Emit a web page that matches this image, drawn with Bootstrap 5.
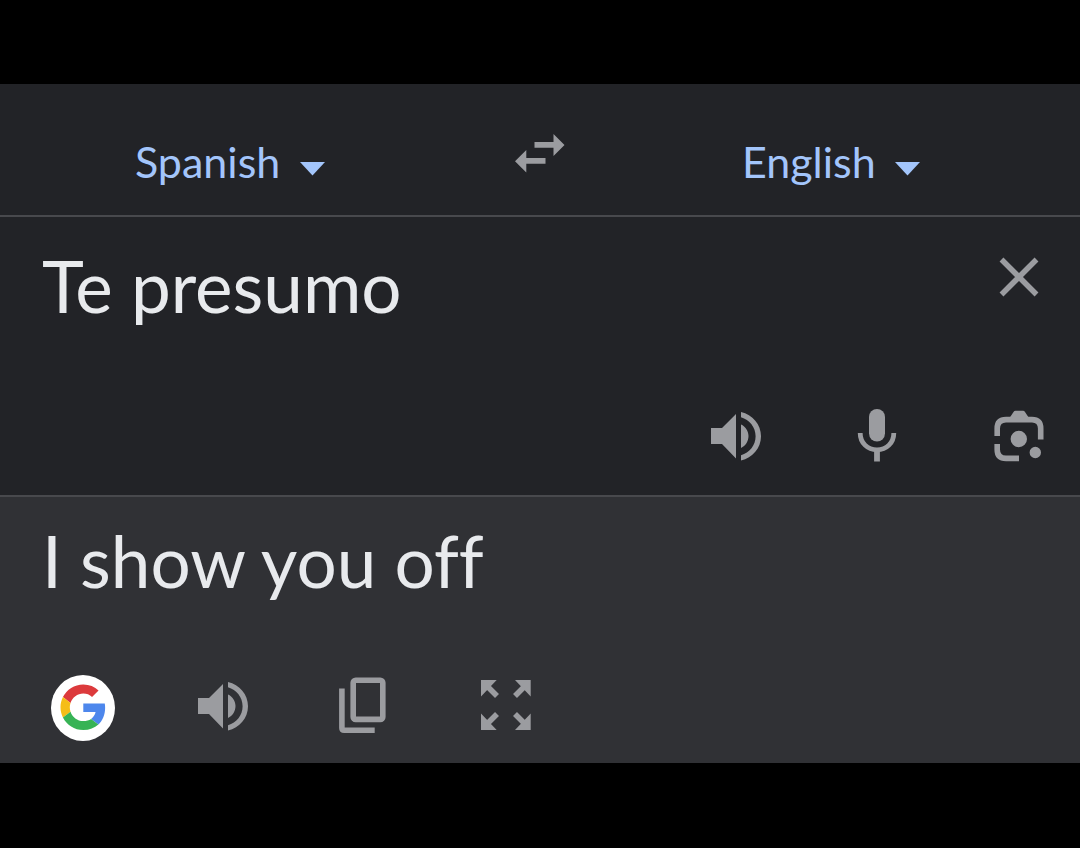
<!DOCTYPE html>
<html lang="en">
<head>
<meta charset="utf-8">
<meta name="viewport" content="width=device-width, initial-scale=1">
<title>Translate</title>
<link href="https://cdn.jsdelivr.net/npm/bootstrap@5.3.0/dist/css/bootstrap.min.css" rel="stylesheet">
<style>
  body { background: #000; color: #e8eaed; font-family: Lato, "Open Sans", sans-serif; padding-bottom: 1px; }
  .translator { background: #222327; }
  .rule-below { border-bottom: 2px solid #48494d; }
  .lang-bar { padding: 38px 0 30px; }
  .lang-slot { flex: 1 1 0; padding-top: 17px; }
  .lang-slot.target .lang-picker { margin-right: 38px; }
  .lang-picker { gap: 19px; color: #a3c5fb; }
  .lang-picker select {
    appearance: none; background: none; border: 0; padding: 0;
    color: inherit; font-size: 43px; line-height: 46px; height: 46px;
  }
  .caret-down { width: 25px; height: 14px; margin-top: 14px; }
  .tool { background: none; border: 0; padding: 0; color: #9b9ca0; width: 64px; height: 62px; flex: none; }
  .tool svg { display: block; width: 64px; height: 62px; }
  .brand-link, .brand-link svg { display: block; width: 64px; height: 66px; }
  .tools { gap: 77px; }
  .source { padding: 29px 29px 28px 42px; }
  .phrase { font-size: 71px; line-height: 80px; color: #e8eaed; font-variant-ligatures: none; }
  .source textarea { background: none; border: 0; padding: 0; resize: none; outline: 0; height: 84px; overflow: hidden; min-width: 0; }
  .source .tools { margin-top: 75px; }
  .result { background: #303135; padding: 24px 29px 22px 42px; }
  .result .tools { margin-top: 74px; padding-left: 9px; }
</style>
</head>
<body class="min-vh-100 d-flex flex-column justify-content-center">
<svg class="d-none" aria-hidden="true">
  <symbol id="speaker" viewBox="0 0 64 62">
    <path fill="currentColor" d="M6 23H17L31 9V53.500L17 39H6ZM36 19.500C40.500 21.500 43.500 26 43.500 31S40.500 41 36 43Z"/>
    <path fill="currentColor" d="M36 7C47.500 9.500 56 19.500 56 31.200S47.500 53 36 55.400V50.200C44.500 47.800 50.600 40.200 50.600 31.200S44.500 14.600 36 12.200Z"/>
  </symbol>
  <symbol id="triangle" viewBox="0 0 25 14"><path fill="currentColor" d="M0 0H25L12.500 13.500Z"/></symbol>
</svg>

<main class="translator">
  <header class="lang-bar rule-below d-flex align-items-start">
    <div class="lang-slot d-flex justify-content-center">
      <label class="lang-picker d-flex align-items-center">
        <select aria-label="Source language"><option>Spanish</option></select>
        <svg class="caret-down" aria-hidden="true"><use href="#triangle"/></svg>
      </label>
    </div>
    <div class="d-flex px-5">
      <button class="tool" type="button" aria-label="Swap languages">
        <svg viewBox="0 0 64 62" fill="currentColor"><path d="M26.500 20H45.500V12L56.500 23L45.500 34V25.800H26.500ZM37.500 36H18.300V28L7 39.200L18.300 50.500V41.800H37.500Z"/></svg>
      </button>
    </div>
    <div class="lang-slot target d-flex justify-content-center">
      <label class="lang-picker d-flex align-items-center">
        <select aria-label="Target language"><option>English</option></select>
        <svg class="caret-down" aria-hidden="true"><use href="#triangle"/></svg>
      </label>
    </div>
  </header>

  <section class="source rule-below">
    <div class="d-flex align-items-start">
      <textarea class="phrase flex-grow-1" rows="1" aria-label="Source text" spellcheck="false">Te presumo</textarea>
      <button class="tool" type="button" aria-label="Clear text">
        <svg viewBox="0 0 64 62" fill="none" stroke="currentColor" stroke-width="5.500"><path d="M14.500 13.500L49.500 48.500M49.500 13.500L14.500 48.500"/></svg>
      </button>
    </div>
    <div class="tools d-flex justify-content-end">
      <button class="tool" type="button" aria-label="Listen to source"><svg><use href="#speaker"/></svg></button>
      <button class="tool" type="button" aria-label="Speak">
        <svg viewBox="0 0 64 62" fill="none" stroke="currentColor"><rect x="23" y="4" width="16" height="32.500" rx="8" fill="currentColor" stroke="none"/><path stroke-width="4.800" d="M14.200 28C14.200 38 21.500 44.800 31 44.800S47.800 38 47.800 28"/><path stroke-width="5.800" d="M31 44V56.500"/></svg>
      </button>
      <button class="tool" type="button" aria-label="Translate with camera">
        <svg viewBox="0 0 64 62" fill="none" stroke="currentColor" stroke-width="5.600"><path d="M10.200 31V23.500Q10.200 14.600 19 14.600H45Q53.700 14.600 53.700 23.500V34.500M10.200 39V44.500Q10.200 53.400 19 53.400H32"/><path fill="currentColor" stroke="none" d="M22.500 13L26.500 7Q27.300 5.800 28.500 5.800H36Q37.300 5.800 38 7L42 13ZM23.600 34a8.200 8.200 0 1 0 16.400 0a8.200 8.200 0 1 0-16.400 0M42.600 47.500a5.700 5.700 0 1 0 11.400 0a5.700 5.700 0 1 0-11.400 0"/></svg>
      </button>
    </div>
  </section>

  <section class="result">
    <p class="phrase mb-0">I show you off</p>
    <div class="tools d-flex align-items-start">
      <a class="brand-link" href="#" aria-label="Search with Google">
        <svg viewBox="0 0 64 66"><ellipse cx="32" cy="33" rx="32" ry="33" fill="#fff"/>
          <g transform="translate(9.500 9.500) scale(.95)">
            <path fill="#dc3a3c" d="M24 9.500c3.540 0 6.710 1.220 9.210 3.600l6.850-6.850C35.900 2.380 30.470 0 24 0 14.620 0 6.510 5.380 2.560 13.220l7.980 6.190C12.430 13.720 17.740 9.500 24 9.500z"/>
            <path fill="#4d87ec" d="M46.980 24.550c0-1.570-.15-3.090-.38-4.550H24v9.020h12.940c-.58 2.960-2.260 5.480-4.780 7.180l7.730 6c4.510-4.180 7.090-10.360 7.090-17.650z"/>
            <path fill="#f5bd17" d="M10.530 28.590c-.48-1.450-.76-2.990-.76-4.590s.27-3.140.76-4.590l-7.980-6.190C.92 16.460 0 20.120 0 24c0 3.880.92 7.540 2.560 10.780l7.970-6.190z"/>
            <path fill="#37b355" d="M24 48c6.480 0 11.930-2.130 15.890-5.810l-7.730-6c-2.150 1.450-4.920 2.300-8.160 2.300-6.260 0-11.570-4.220-13.470-9.910l-7.980 6.190C6.510 42.620 14.620 48 24 48z"/>
          </g></svg>
      </a>
      <button class="tool" type="button" aria-label="Listen to translation"><svg><use href="#speaker"/></svg></button>
      <button class="tool" type="button" aria-label="Copy translation">
        <svg viewBox="0 0 64 62" fill="none" stroke="currentColor" stroke-width="5.600"><rect x="20.200" y="5.200" width="29.600" height="39.200" rx="2.500"/><path d="M8.900 13.500V53Q8.900 55.300 11.200 55.300H41.700"/></svg>
      </button>
      <button class="tool" type="button" aria-label="Full screen">
        <svg viewBox="0 0 64 62" fill="currentColor" stroke="currentColor" stroke-width="5.600"><path stroke="none" d="M7 5H22.700L7 21.500ZM56.700 5V21.500L41 5ZM7 55V38.500L22.700 55ZM56.700 55H41L56.700 38.500Z"/><path d="M10 8L23 21M54 8L41 21M10 52L23 39M54 52L41 39"/></svg>
      </button>
    </div>
  </section>
</main>
<script src="https://cdn.jsdelivr.net/npm/bootstrap@5.3.0/dist/js/bootstrap.bundle.min.js"></script>
</body>
</html>
